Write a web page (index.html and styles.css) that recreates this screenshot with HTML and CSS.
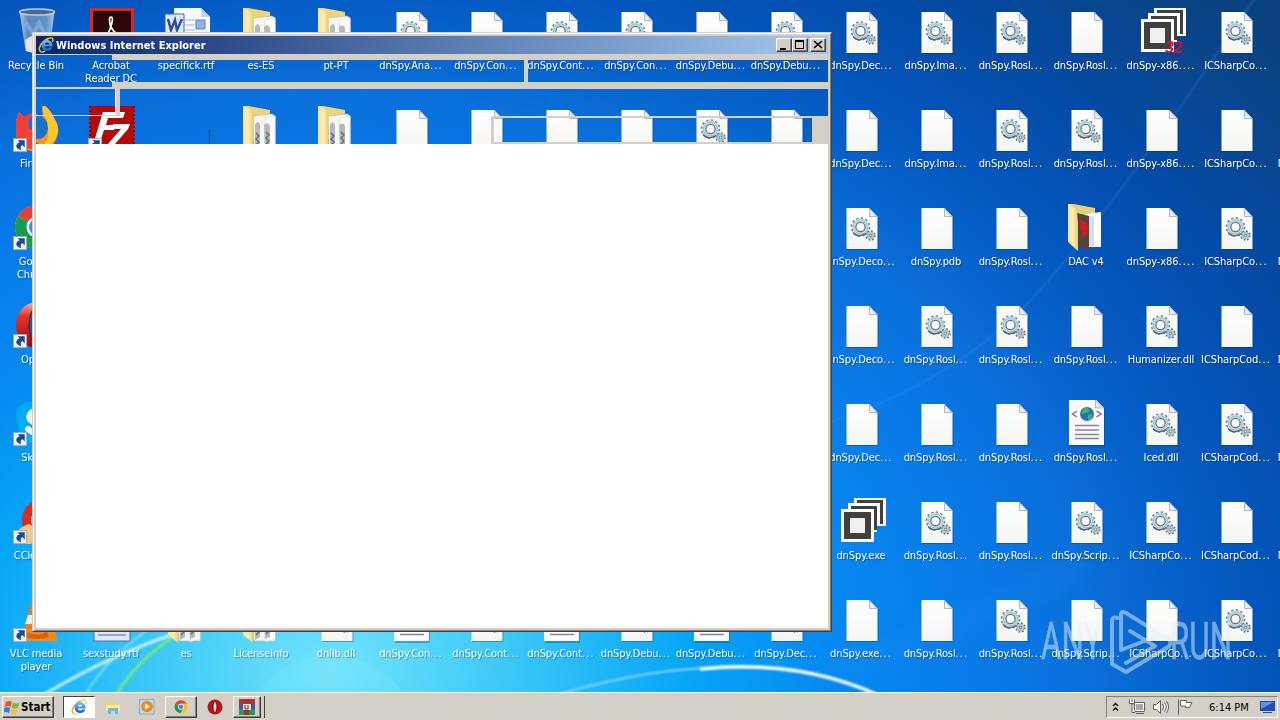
FILE: index.html
```
<!DOCTYPE html>
<html lang="en">
<head>
  <meta charset="UTF-8" />
  <title>Desktop</title>
  <link rel="stylesheet" href="styles.css">
</head>
<body>
  <!-- Icon sprites, 48x48 each -->
  <svg class="sprites" xmlns="http://www.w3.org/2000/svg">
    <defs>
      <linearGradient id="paper" x1="0" y1="0" x2="0" y2="1">
        <stop offset="0" stop-color="#fff" />
        <stop offset="1" stop-color="#f5f5f4" />
      </linearGradient>
      <linearGradient id="folderFill" x1="0" y1="0" x2="1" y2="0">
        <stop offset="0" stop-color="#f5e190" />
        <stop offset=".5" stop-color="#fbf0b8" />
        <stop offset="1" stop-color="#e9cb6b" />
      </linearGradient>
      <linearGradient id="binFill" x1="0" y1="0" x2="1" y2="0">
        <stop offset="0" stop-color="#b5cbe4" />
        <stop offset=".25" stop-color="#5a86bf" />
        <stop offset=".75" stop-color="#5f92cd" />
        <stop offset="1" stop-color="#a9c5e2" />
      </linearGradient>
      <linearGradient id="operaFill" x1="0" y1="0" x2="0" y2="1">
        <stop offset="0" stop-color="#f7b3ac" />
        <stop offset=".3" stop-color="#e5352c" />
        <stop offset="1" stop-color="#8d0a0c" />
      </linearGradient>
      <linearGradient id="ieFill" x1="0" y1="0" x2="0" y2="1">
        <stop offset="0" stop-color="#6cc8f8" />
        <stop offset="1" stop-color="#125db8" />
      </linearGradient>
    </defs>

    <symbol id="file" viewBox="0 0 48 48">
      <path d="M9 5.500H33L40.500 13V46H9z" fill="#002a66" opacity=".35" />
      <path d="M8.500 4h23l8 8.500V45h-31z" fill="url(#paper)" />
      <path d="M31.500 4.500v8h7.500z" fill="#e9eef2" stroke="#9aa8b4" stroke-width=".8" />
    </symbol>

    <symbol id="gears" viewBox="0 0 48 48">
      <circle cx="22.500" cy="23" r="8.300" fill="none" stroke="#64818f" stroke-width="3" stroke-dasharray="2.200 2.146" />
      <circle cx="22.500" cy="23" r="6.600" fill="none" stroke="#c2dfeb" stroke-width="3.600" />
      <circle cx="22.500" cy="23" r="7" fill="none" stroke="#94b8c9" stroke-width=".8" />
      <circle cx="22.500" cy="23" r="4.600" fill="#fff" stroke="#66727b" stroke-width="1.300" />
      <path d="M15 28.500q5 6 13 1" fill="none" stroke="#54636e" stroke-width="1.200" />
      <circle cx="32.500" cy="31.500" r="4" fill="none" stroke="#4f6472" stroke-width="2.400" stroke-dasharray="1.600 1.540" />
      <circle cx="32.500" cy="31.500" r="3" fill="#fff" stroke="#a5c0cd" stroke-width="2" />
      <circle cx="32.500" cy="31.500" r="1.300" fill="#fff" stroke="#3d4c58" stroke-width=".8" />
    </symbol>

    <symbol id="dll" viewBox="0 0 48 48">
      <use href="#file" /><use href="#gears" />
    </symbol>

    <symbol id="xml" viewBox="0 0 48 48">
      <path d="M7 1h27l8 8v38H7z" fill="#002a66" opacity=".3" />
      <path d="M6 -1h26.500l8.500 9v37H6z" fill="#fbfbfb" />
      <path d="M32.500 0v8H41z" fill="#dfe5ec" stroke="#9aa8b4" stroke-width=".7" />
      <circle cx="24" cy="14" r="7" fill="#2674b5" />
      <path d="M20 9q4-3 6 0t-3 4-5 1zM25 15q5-2 4 2t-4 3z" fill="#44b062" />
      <path d="M14 11l-4.500 3 4.500 3M33.500 11l4.500 3-4.500 3" fill="none" stroke="#8c6aa8" stroke-width="1.500" />
      <path d="M12 25.500h24M12 30h24M12 34.500h24M12 38.500h24" stroke="#8582ab" stroke-width="1.700" />
    </symbol>

    <symbol id="folder" viewBox="0 0 48 48">
      <path d="M5 -1l27 5v35H17z" fill="#efd477" />
      <path d="M15 10l19-2 3.500 2v35H16z" fill="#f6f6f5" stroke="#b7b7b7" stroke-width=".6" />
      <path d="M27 12l10-2v33l-10 3z" fill="#fff" stroke="#c9c9c9" stroke-width=".5" />
      <path d="M17 19q3-6 5 0v22l-5 3zM26 19q4-4 6 1v21l-5 2z" fill="#b9b8b5" />
      <path d="M18 27l3 3-3 3 3 3-3 3M28 26l3 3-3 3 3 3-3 3" stroke="#596876" stroke-width="1.300" fill="none" />
      <path d="M5 -1l10.500 7v41L5 39z" fill="url(#folderFill)" />
    </symbol>

    <symbol id="folder-dac" viewBox="0 0 48 48">
      <path d="M5 -1l27 5v35H17z" fill="#e9cf76" />
      <path d="M23 10l15-2v35H23z" fill="#fff" />
      <path d="M21 10l10 3v29h-10z" fill="#d4ddeb" />
      <path d="M14 9l12 3v35l-12-5z" fill="#53423e" />
      <path d="M17 16q8 1 8 9t-7 8q4-6-1-9z" fill="#cf1c17" />
      <path d="M5 -1l9 7 1 13v28L5 38z" fill="url(#folderFill)" />
    </symbol>

    <symbol id="dnspy" viewBox="0 0 48 48">
      <path d="M16 -1h32v29H16z" fill="#fff" />
      <path d="M19 2h26v24h-3V5H19z" fill="#404040" />
      <path d="M10 5h29v29H10z" fill="#fff" />
      <path d="M13 8h26v24h-3V11H13z" fill="#404040" />
      <path d="M3 11h33v33H3z" fill="#fff" />
      <path d="M6 14h27v27H6z" fill="#404040" />
      <path d="M12 20h15v15H12z" fill="#f0f0f0" />
    </symbol>

    <symbol id="dnspy32" viewBox="0 0 48 48">
      <use href="#dnspy" />
      <text x="27" y="45" class="badge-32">32</text>
    </symbol>

    <symbol id="bin" viewBox="0 0 48 48">
      <path d="M6.500 3h35l-5 40q-12 4-24 0z" fill="url(#binFill)" />
      <path d="M12 32l6-4 6 4 7-5 6 4-1 12q-12 4-23 0z" fill="#e3e6e9" />
      <path d="M13 14l7 12 6-11 7 13" fill="none" stroke="#8fb5e0" stroke-width="4" opacity=".6" />
      <ellipse cx="24" cy="4" rx="17.500" ry="3" fill="#46699a" stroke="#c4d0dc" stroke-width="1.500" />
    </symbol>

    <symbol id="acrobat" viewBox="0 0 48 48">
      <path d="M2 0h44v47H2z" fill="#e0261c" />
      <path d="M5 3h38v41H5z" fill="#2a0509" />
      <path d="M23 20c-2-8-2-11 0-11s2 4-1 12q-3 8-8 11M23 19q4 8 12 9" fill="none" stroke="#fff" stroke-width="1.700" />
    </symbol>

    <symbol id="word" viewBox="0 0 48 48">
      <path d="M11 0h27l9 9v36H11z" fill="#f8fafd" />
      <path d="M38 0v9h9z" fill="#c7d3e4" />
      <path d="M22 12h10M22 17h10M22 22h10M22 27h22M14 32h30" stroke="#9db8de" />
      <path d="M33 12h9v9h-9z" fill="#8fb4e4" stroke="#5c86c4" />
      <path d="M2 6h19v19H2z" fill="#dfe9f8" stroke="#3f63ae" />
      <path d="M5 11l3 11 4-10 2 10 5-11" fill="none" stroke="#2b4f9e" stroke-width="2.500" />
    </symbol>

    <symbol id="rtf" viewBox="0 0 48 48">
      <path d="M6 2h36v43H6z" fill="#dfe8fb" stroke="#5a6fa8" />
      <path d="M10 34h28M10 39h28" stroke="#7d8fd0" stroke-width="1.500" />
    </symbol>

    <symbol id="blank" viewBox="0 0 48 48">
      <path d="M46.500 24v20" stroke="#0a3f8a" />
    </symbol>

    <symbol id="firefox" viewBox="0 0 48 48">
      <path d="M3 15l3-9 5 5q6-5 12-3l7 4-1-13q7 5 10 11 10 10 4 24Q36 47 22 46 4 43 3 26z" fill="#f7941d" />
      <path d="M3 15l3-9 5 5q5-4 11-4-7 9 1 14l7 3q-2 9-12 7l9 8q-8 7-16 2Q3 36 3 26z" fill="#f0403b" />
      <path d="M16 12q10-5 17 2 5 9-2 17-6 4-13 0 6 0 6-5l-8-4z" fill="#1873cd" />
      <path d="M33 12q-5-5-3-14 8 6 11 14 9 15-2 25-9 8-18 7 12-3 14-14 1-10-2-18z" fill="#ffc627" />
    </symbol>

    <symbol id="filezilla" viewBox="0 0 48 48">
      <path d="M2 0h44v47H2z" fill="#b30a0a" stroke="#a30000" stroke-width="2" stroke-dasharray="2 2" />
      <path d="M15 6h22l-2 6H20l-2 7h10l-2 5H16l-5 15H5z" fill="#fff" />
      <path d="M25 18h17l-2 5-13 15h11l-1 5H18l2-5 13-15h-9z" fill="#fff" />
    </symbol>

    <symbol id="chrome" viewBox="0 0 48 48">
      <circle cx="24" cy="23" r="22" fill="#fbc116" />
      <path d="M24 23L5 12A22 22 0 0 1 43 12H24z" fill="#dd4437" />
      <path d="M24 23L5 12a22 22 0 0 0 17 33l9-17z" fill="#1a9a50" />
      <circle cx="24" cy="23" r="10.500" fill="#fff" />
      <circle cx="24" cy="23" r="8" fill="#4486f4" />
    </symbol>

    <symbol id="opera" viewBox="0 0 48 48">
      <ellipse cx="24" cy="23" rx="21" ry="23" fill="url(#operaFill)" />
      <ellipse cx="24" cy="23" rx="8" ry="18" fill="#0e5fa8" stroke="#7e0808" />
    </symbol>

    <symbol id="skype" viewBox="0 0 48 48">
      <circle cx="17" cy="16" r="14" fill="#00a9f0" />
      <circle cx="25" cy="24" r="20" fill="#00aff0" />
      <path d="M34 14q-7-6-15-2-6 6 1 10l8 3q6 3 0 7-7 3-13-3" fill="none" stroke="#fff" stroke-width="6" stroke-linecap="round" />
    </symbol>

    <symbol id="ccleaner" viewBox="0 0 48 48">
      <circle cx="30" cy="22" r="21" fill="#d42f22" />
      <circle cx="30" cy="22" r="12" fill="#cfdce8" />
      <path d="M2 36q6-8 14-10l10 6-8 14H6z" fill="#f3c78c" />
    </symbol>

    <symbol id="vlc" viewBox="0 0 48 48">
      <path d="M20 1h8l10 36H10z" fill="#f27a12" />
      <path d="M15 19h18l3 9H12z" fill="#eee" />
      <path d="M7 33h34l4 12H3z" fill="#f58a14" />
      <path d="M14 36q10 5 20 0l2 5q-12 4-24 0z" fill="#d8610a" />
    </symbol>

    <symbol id="shortcut" viewBox="0 0 16 16">
      <path d="M.5 .5h14v14H.500z" fill="#eef3f8" stroke="#a3a9b0" />
      <path d="M5 2.500h7.500V10L10 7.500q-2.500 1-1.500 5.500Q3 11.500 3.500 8 4 5.500 7 4.500z" fill="#1b4a8d" />
    </symbol>

    <symbol id="ie" viewBox="0 0 16 16">
      <path d="M2.500 14.500C-1 12 4 4 10 1.500" fill="none" stroke="#e3b52a" stroke-width="1.600" />
      <path d="M9 3a5.500 5.500 0 0 1 5.500 6.500H7q.3 2 2.200 2 1.300 0 1.800-1h3.300Q13 14 9 14a5.500 5.500 0 0 1 0-11zM7 7.500h4.200Q11 5.500 9.200 5.500 7.300 5.500 7 7.500z" fill="url(#ieFill)" />
      <path d="M2 14.500q2 1.500 5-.500M9 2.200q6-3 6 .800 0 1-.5 2" fill="none" stroke="#f5d14a" stroke-width="1.300" />
    </symbol>
  </svg>

  <div class="desktop">
    <svg class="wallpaper" viewBox="0 0 1280 692" preserveAspectRatio="none">
      <defs>
        <filter id="soft"><feGaussianBlur stdDeviation="1.200" /></filter>
        <filter id="haze" x="-20%" y="-20%" width="140%" height="140%"><feGaussianBlur stdDeviation="12" /></filter>
      </defs>
      <circle cx="330" cy="745" r="90" fill="#8defff" opacity=".16" />
      <g filter="url(#soft)" fill="none">
        <path d="M45 694Q110 655 185 630" stroke="#e6fbff" stroke-width="3" opacity=".8" />
        <path d="M86 694Q105 660 150 628" stroke="#b8f2ff" stroke-width="2" opacity=".6" />
        <path d="M117 694Q140 655 185 630" stroke="#84ee5e" stroke-width="2.500" />
        <path d="M560 694Q660 664 760 667" stroke="#8fd4ff" stroke-width="2" />
        <path d="M700 669Q800 659 880 696" stroke="#fff" stroke-width="3.500" />
        <path d="M830 422Q960 380 1040 290T1260 -10" stroke="#6aa9ee" stroke-width="1.500" opacity=".25" />
      </g>
      <path d="M830 660Q1000 600 1080 550V580Q960 640 830 680z" fill="#39a0ff" opacity=".15" filter="url(#haze)" />
    </svg>

    <div class="icon-grid" id="iconGrid"></div>

    <svg class="watermark" viewBox="0 0 200 70">
      <text x="1" y="53" textLength="61" lengthAdjust="spacingAndGlyphs">ANY</text>
      <path d="M78 12q-6-2-6 3v43l14 8M81 44V9q0-5 5-2l42 26M81 44l34-13M86 66l42-25q5-4 0-8M86 57l29-17-25-15" />
      <text x="130" y="53" textLength="62" lengthAdjust="spacingAndGlyphs">RUN</text>
    </svg>
  </div>

  <!-- Half painted browser window: the toolbar rows let the desktop through -->
  <div class="window">
    <div class="title-bar">
      <svg class="title-icon"><use href="#ie" /></svg>
      <span class="title-text">Windows Internet Explorer</span>
      <div class="title-buttons">
        <button class="tb"><svg viewBox="0 0 14 13"><path d="M3 9h6v2H3z" /></svg></button>
        <button class="tb"><svg viewBox="0 0 14 13"><path d="M2 1h9v9H2zM3 3v6h7V3z" fill-rule="evenodd" /></svg></button>
        <button class="tb tb-close"><svg viewBox="0 0 14 13"><path d="M3 2l8 7M11 2L3 9" stroke="#000" stroke-width="1.600" /></svg></button>
      </div>
    </div>
    <div class="address-row">
      <div class="nav-gap"></div>
      <div class="address-gap"></div>
      <div class="search-gap"></div>
    </div>
    <div class="menu-row"><div class="menu-gap"></div></div>
    <div class="tab-row"><div class="command-gap"></div></div>
    <div class="page"></div>
  </div>

  <div class="taskbar">
    <button class="start">
      <svg viewBox="0 0 16 16">
        <path d="M2 3q3-2 6 0L6.500 8Q4 6 .5 8z" fill="#e5542b" />
        <path d="M9 3.500q3 2 6.500 0L14 8.500q-3 2-6.500 0z" fill="#7cb83d" />
        <path d="M.3 9q3-2 6 0L5 14Q2 12-1 14z" fill="#3a7fd0" />
        <path d="M7.300 9.500q3 2 6.500 0L12.500 14q-3 2-6.500 0z" fill="#f5bd2c" />
      </svg>
      <span>Start</span>
    </button>
    <div class="task task-active"><svg><use href="#ie" /></svg></div>
    <div class="task">
      <svg viewBox="0 0 16 16">
        <path d="M1 2h5l1 2h7v8H1z" fill="#f0cf67" />
        <path d="M1 6h14v6H1z" fill="#fae99f" />
        <path d="M3 15V9h10v6h-3v-3H6v3z" fill="#6db8e4" />
      </svg>
    </div>
    <div class="task">
      <svg viewBox="0 0 16 16">
        <path d="M.5 .5h14.500v14.500H.500z" fill="#bcd9ef" stroke="#7fadd2" />
        <circle cx="8" cy="7.500" r="5.800" fill="#f28a17" />
        <path d="M6 4.500l5 3-5 3z" fill="#fff" />
      </svg>
    </div>
    <div class="task task-raised"><svg class="task-chrome"><use href="#chrome" /></svg></div>
    <div class="task task-opera">
      <svg viewBox="0 0 16 16">
        <circle cx="8" cy="8" r="7.500" fill="#b8141a" />
        <ellipse cx="8" cy="8" rx="2" ry="5.500" fill="#f1dada" stroke="#6e0508" />
      </svg>
    </div>
    <div class="task task-raised task-stack">
      <svg viewBox="0 0 16 16">
        <path d="M0 0h16v5H0z" fill="#b92f3a" />
        <path d="M0 5h16v5H0z" fill="#3459b8" />
        <path d="M0 10h16v6H0z" fill="#2f9550" />
        <path d="M5 0h5v16H5z" fill="#8d3c28" />
        <path d="M4 5h8v6H4z" fill="#e9dfc8" />
        <path d="M6 6v4h3V6" fill="none" stroke="#5a3a22" />
      </svg>
    </div>

    <div class="tray">
      <svg class="tray-chevron" viewBox="0 0 7 10"><path d="M1 4l2.500-2.500L6 4M1 8.500L3.500 6 6 8.500" /></svg>
      <svg class="tray-icon" viewBox="0 0 16 16">
        <path d="M5.500 3.500h10v9h-10zM7 14.500h8" />
        <path d="M7 5h7v6H7z" class="tray-fill" />
        <path d="M.5 .5v4h5v-4M3 0v3M3 5v8.500h3" />
      </svg>
      <svg class="tray-icon tray-volume" viewBox="0 0 16 16">
        <path d="M.5 5.500h3l4-4v13l-4-4h-3zM9.500 5q2 3 0 6M11.500 3.500q3.500 4.500 0 9M13.500 2q4 6 0 12" />
      </svg>
      <svg class="tray-icon" viewBox="0 0 16 16">
        <path d="M1.500 .5v15M3.500 1.500h6v2h5.500l-2.500 5h-4v-1.500h-5z" />
      </svg>
      <span class="clock">6:14 PM</span>
      <svg class="show-desktop" viewBox="0 0 15 13">
        <path d="M0 0h15v10H0z" fill="#1d4fb5" />
        <path d="M1 1h13L1 8z" fill="#5f94e2" />
        <path d="M3 11h9v1H3z" fill="#2a4a80" />
      </svg>
    </div>
  </div>

  <script src="script.js"></script>
</body>
</html>
```

FILE: styles.css
```
* {
  margin: 0;
  padding: 0;
  box-sizing: border-box;
}
body {
  width: 1280px;
  height: 720px;
  overflow: hidden;
  position: relative;
  display: flex;
  flex-direction: column;
  font-family: 'DejaVu Sans Condensed', 'DejaVu Sans', sans-serif;
  font-size: 11px;
}
.sprites {
  position: absolute;
  width: 0;
  height: 0;
}

/* Desktop */
.desktop {
  position: relative;
  height: 692px;
  overflow: hidden;
  background: radial-gradient(ellipse 1000px 760px at 330px 670px,
    #72e4fa 0%, #3cc8f8 18%, #06a5f6 36%, #0689f0 50%, #087ce9 63%,
    #0a6fda 76%, #0356bd 92%, #044ba6 105%, #0a427f 125%);
}
.wallpaper {
  position: absolute;
  inset: 0;
  width: 1280px;
  height: 692px;
}
.icon-grid {
  position: relative;
  width: 1350px;
  margin-left: -1px;
  padding-top: 8px;
  display: grid;
  grid-auto-flow: column;
  grid-template-rows: repeat(7, 98px);
  grid-auto-columns: 75px;
}
.icon {
  position: relative;
  display: flex;
  flex-direction: column;
  align-items: center;
}
.icon-img {
  width: 48px;
  height: 48px;
  overflow: visible;
}
.icon-arrow {
  position: absolute;
  left: 14px;
  top: 32px;
  width: 15px;
  height: 15px;
}
.icon-label {
  margin-top: 3px;
  margin-left: -1px;
  color: #fff;
  line-height: 13px;
  letter-spacing: -0.1px;
  text-align: center;
  white-space: pre;
  text-shadow: 1px 1px 1px rgba(0, 20, 70, 0.4);
}
.dots {
  letter-spacing: 1.1px;
}
.badge-32 {
  font: italic bold 16px 'Liberation Sans', sans-serif;
  fill: #d0103c;
}
.watermark {
  position: absolute;
  left: 1040px;
  top: 606px;
  width: 200px;
  height: 70px;
  opacity: 0.5;
}
.watermark text {
  font: 400 51px Roboto, sans-serif;
  fill: #e4f1ff;
  stroke: #e4f1ff;
  stroke-width: 0.6;
}
.watermark path {
  fill: none;
  stroke: #e4f1ff;
  stroke-width: 4;
  stroke-linejoin: round;
  stroke-linecap: round;
}

/* Browser window */
.window {
  position: absolute;
  left: 32px;
  top: 32px;
  width: 800px;
  height: 600px;
  padding: 1px;
  display: flex;
  flex-direction: column;
  border: 1px solid;
  border-color: #d4d0c8 #404040 #404040 #d4d0c8;
  box-shadow: inset 1px 1px #fff, inset -1px -1px #808080;
}
.title-bar {
  height: 20px;
  flex: none;
  padding: 0 2px;
  display: flex;
  align-items: center;
  border: solid #d4d0c8;
  border-width: 2px 2px 0;
  background: linear-gradient(90deg, #0a246a, #a6caf0);
}
.title-icon {
  width: 16px;
  height: 16px;
}
.title-text {
  margin-left: 2px;
  color: #fff;
  font-weight: bold;
}
.title-buttons {
  margin-left: auto;
  display: flex;
}
.tb {
  width: 16px;
  height: 14px;
  border: 1px solid;
  border-color: #fff #404040 #404040 #fff;
  box-shadow: inset -1px -1px #808080;
  background: #d4d0c8;
}
.tb svg {
  display: block;
  width: 14px;
  height: 13px;
}
.tb-close {
  margin-left: 2px;
}
.address-row,
.menu-row,
.tab-row {
  flex: none;
  display: flex;
  border: solid #d4d0c8;
  border-width: 0 2px;
}
.address-row {
  height: 35px;
}
.nav-gap {
  width: 76px;
  border-top: 1px solid #d4d0c8;
  border-bottom: 2px solid #d4d0c8;
}
.address-gap {
  width: 416px;
  border: solid #d4d0c8;
  border-width: 6px 4px 7px 0;
}
.search-gap {
  flex: 1;
  border: solid #d4d0c8;
  border-width: 6px 0 7px;
}
.menu-row {
  height: 27px;
}
.menu-gap {
  width: 84px;
  border: solid #d4d0c8;
  border-width: 0 4px 1px 0;
  box-shadow: inset -1px 0 #fff;
}
.tab-row {
  height: 28px;
}
.command-gap {
  width: 337px;
  margin-left: auto;
  border: solid #d4d0c8;
  border-width: 2px 16px 2px 3px;
}
.page {
  flex: 1;
  background: #fff;
  border: solid #d4d0c8;
  border-width: 0 2px 2px;
}

/* Taskbar */
.taskbar {
  height: 28px;
  padding: 3px 2px 2px;
  display: flex;
  background: #d4d0c8;
  border-top: 1px solid #fff;
  color: #000;
}
.start {
  width: 52px;
  height: 22px;
  display: flex;
  align-items: center;
  gap: 1px;
  padding-left: 1px;
  border: 1px solid;
  border-color: #fff #404040 #404040 #fff;
  box-shadow: inset -1px -1px #808080;
  background: #d4d0c8;
  font: bold 11.5px 'DejaVu Sans Condensed', sans-serif;
}
.start svg {
  width: 16px;
  height: 16px;
}
.task {
  width: 32px;
  height: 22px;
  margin-right: 2px;
  display: flex;
  align-items: center;
  justify-content: center;
  border: 1px solid transparent;
}
.task svg {
  width: 16px;
  height: 16px;
}
.task .task-chrome {
  width: 14px;
  height: 14px;
}
.task-active {
  margin-left: 9px;
  border-color: #404040 #fff #fff #404040;
  background: #fff;
}
.task-raised {
  border-color: #fff #404040 #404040 #fff;
  box-shadow: inset -1px -1px #808080;
}
.task-stack {
  width: 28px;
  box-shadow: inset -1px -1px #808080, 3px 0 #d4d0c8, 4px 0 #404040;
}
.tray {
  margin-left: auto;
  width: 172px;
  height: 22px;
  display: flex;
  align-items: center;
  padding-left: 5px;
  border: 1px solid;
  border-color: #808080 #fff #fff #808080;
}
.tray svg {
  fill: none;
}
.tray-chevron {
  width: 7px;
  height: 10px;
  margin-right: 10px;
  stroke: #000;
  stroke-width: 1.3;
}
.tray-icon {
  width: 16px;
  height: 16px;
  margin-right: 8px;
  stroke: #606060;
}
.tray-icon path {
  fill: #fff;
}
.tray-icon .tray-fill {
  fill: #a8a8a8;
  stroke: none;
}
.clock {
  margin-left: 8px;
}
.show-desktop {
  width: 15px;
  height: 13px;
  margin-left: auto;
  margin-right: 2px;
}
```

FILE: script.js
```
const iconGrid = document.getElementById('iconGrid');

// [sprite, label, has shortcut arrow], one array per desktop column
const columns = [
  [['bin', 'Recycle Bin'], ['firefox', 'Firefox', 1], ['chrome', 'Google\nChrome', 1], ['opera', 'Opera', 1],
   ['skype', 'Skype', 1], ['ccleaner', 'CCleaner', 1], ['vlc', 'VLC media\nplayer', 1]],
  [['acrobat', 'Acrobat\nReader DC'], ['filezilla', '', 1], null, null, null, null, ['rtf', 'sexstudy.rtf']],
  [['word', 'specifick.rtf'], ['blank', ''], null, null, null, null, ['folder', 'es']],
  [['folder', 'es-ES'], ['folder', ''], null, null, null, null, ['folder', 'LicenseInfo']],
  [['folder', 'pt-PT'], ['folder', ''], null, null, null, null, ['dll', 'dnlib.dll']],
  [['dll', 'dnSpy.Ana...'], ['file', ''], null, null, null, null, ['xml', 'dnSpy.Con...']],
  [['file', 'dnSpy.Con...'], ['file', ''], null, null, null, null, ['dll', 'dnSpy.Cont...']],
  [['dll', 'dnSpy.Cont...'], ['file', ''], null, null, null, null, ['xml', 'dnSpy.Cont...']],
  [['dll', 'dnSpy.Con...'], ['file', ''], null, null, null, null, ['dll', 'dnSpy.Debu...']],
  [['file', 'dnSpy.Debu...'], ['dll', ''], null, null, null, null, ['xml', 'dnSpy.Debu...']],
  [['dll', 'dnSpy.Debu...'], ['file', ''], null, null, null, null, ['dll', 'dnSpy.Dec...']],
  [['dll', 'dnSpy.Dec...'], ['file', 'dnSpy.Dec...'], ['dll', 'dnSpy.Deco...'], ['file', 'dnSpy.Deco...'],
   ['file', 'dnSpy.Dec...'], ['dnspy', 'dnSpy.exe'], ['file', 'dnSpy.exe...']],
  [['dll', 'dnSpy.Ima...'], ['file', 'dnSpy.Ima...'], ['file', 'dnSpy.pdb'], ['dll', 'dnSpy.Rosl...'],
   ['file', 'dnSpy.Rosl...'], ['dll', 'dnSpy.Rosl...'], ['file', 'dnSpy.Rosl...']],
  [['dll', 'dnSpy.Rosl...'], ['dll', 'dnSpy.Rosl...'], ['file', 'dnSpy.Rosl...'], ['dll', 'dnSpy.Rosl...'],
   ['file', 'dnSpy.Rosl...'], ['file', 'dnSpy.Rosl...'], ['dll', 'dnSpy.Rosl...']],
  [['file', 'dnSpy.Rosl...'], ['dll', 'dnSpy.Rosl...'], ['folder-dac', 'DAC v4'], ['file', 'dnSpy.Rosl...'],
   ['xml', 'dnSpy.Rosl...'], ['dll', 'dnSpy.Scrip...'], ['file', 'dnSpy.Scrip...']],
  [['dnspy32', 'dnSpy-x86....'], ['file', 'dnSpy-x86....'], ['file', 'dnSpy-x86....'], ['dll', 'Humanizer.dll'],
   ['dll', 'Iced.dll'], ['dll', 'ICSharpCo...'], ['file', 'ICSharpCo...']],
  [['dll', 'ICSharpCo...'], ['file', 'ICSharpCo...'], ['dll', 'ICSharpCo...'], ['file', 'ICSharpCod...'],
   ['dll', 'ICSharpCod...'], ['file', 'ICSharpCod...'], ['dll', 'ICSharpCo...']],
  [null, ['file', 'Microsoft.V...'], ['file', 'Microsoft.V...'], ['file', 'Microsoft.V...'],
   ['file', 'Microsoft.V...'], ['file', 'Microsoft.V...'], ['file', 'Microsoft.V...']]
];

function iconHtml(icon) {
  if (!icon) return '<div class="icon"></div>';
  const [sprite, label, shortcut] = icon;
  const arrow = shortcut ? '<svg class="icon-arrow"><use href="#shortcut" /></svg>' : '';
  const text = label.replace(/\.{3,}$/, dots => `<span class="dots">${dots}</span>`);
  return `<div class="icon">
    <svg class="icon-img"><use href="#${sprite}" /></svg>${arrow}
    <span class="icon-label">${text}</span>
  </div>`;
}

iconGrid.innerHTML = columns.flat().map(iconHtml).join('');
```
